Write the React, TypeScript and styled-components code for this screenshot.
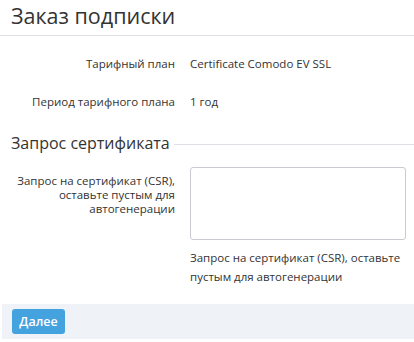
import styled, { createGlobalStyle } from "styled-components";

const GlobalStyle = createGlobalStyle`
  html, body {
    margin: 0;
    padding: 0;
    background: #fff;
  }
  body {
    font-family: "Open Sans", "Noto Sans", sans-serif;
    color: #333;
  }
`;

const Page = styled.div`
  width: 414px;
  height: 342px;
  overflow: hidden;
`;

const Header = styled.div`
  height: 35px;
  padding: 0 11px;
  border-bottom: 1px solid #dcdfe4;
  display: flex;
  align-items: center;
`;

const Title = styled.h1`
  margin: -4px 0 0;
  font-size: 21.5px;
  font-weight: 400;
  color: #333;
  line-height: 30px;
`;

const Form = styled.div`
  padding-top: 18px;
`;

const Row = styled.div<{ $top?: boolean }>`
  display: grid;
  grid-template-columns: 175px 1fr;
  column-gap: 15px;
  align-items: ${(p) => (p.$top ? "start" : "center")};
  min-height: 20px;
  margin-bottom: 18px;
  font-size: 11.5px;
`;

const Label = styled.div<{ $pad?: number }>`
  text-align: right;
  line-height: 14px;
  color: #333;
  padding-top: ${(p) => p.$pad ?? 0}px;
`;

const Value = styled.div`
  color: #333;
  line-height: 20px;
`;

const Section = styled.div`
  display: flex;
  align-items: center;
  gap: 4px;
  padding-left: 11px;
  margin-top: 20px;
  margin-bottom: 13px;
`;

const SectionTitle = styled.div`
  font-size: 16px;
  line-height: 22px;
  color: #333;
`;

const Rule = styled.div`
  flex: 1;
  height: 1px;
  background: #dcdfe4;
  margin-top: 2px;
`;

const Field = styled.div`
  padding-right: 8px;
`;

const TextArea = styled.textarea`
  display: block;
  box-sizing: border-box;
  width: 216px;
  height: 73px;
  border: 1px solid #c8ccd2;
  border-radius: 3px;
  resize: none;
  outline: none;
  font-family: inherit;
`;

const Help = styled.div`
  margin-top: 8px;
  font-size: 11.5px;
  line-height: 19px;
  white-space: nowrap;
  color: #333;
`;

const Footer = styled.div`
  margin: 15px 0 0 2px;
  height: 35px;
  background: #eff3f7;
  display: flex;
  align-items: center;
  padding-left: 10px;
`;

const Button = styled.button`
  height: 25px;
  width: 53px;
  padding: 0;
  border: none;
  border-radius: 3px;
  background: #44a3de;
  color: #fff;
  font-family: "Open Sans", "Noto Sans", sans-serif;
  font-size: 12.5px;
  font-weight: 600;
  cursor: pointer;
`;

export default function App() {
  return (
    <Page>
      <GlobalStyle />
      <Header>
        <Title>Заказ подписки</Title>
      </Header>
      <Form>
        <Row>
          <Label>Тарифный план</Label>
          <Value>Certificate Comodo EV SSL</Value>
        </Row>
        <Row>
          <Label>Период тарифного плана</Label>
          <Value>1 год</Value>
        </Row>
        <Section>
          <SectionTitle>Запрос сертификата</SectionTitle>
          <Rule />
        </Section>
        <Row $top>
          <Label $pad={7}>
            Запрос на сертификат (CSR),
            <br />
            оставьте пустым для
            <br />
            автогенерации
          </Label>
          <Field>
            <TextArea />
            <Help>
              Запрос на сертификат (CSR), оставьте
              <br />
              пустым для автогенерации
            </Help>
          </Field>
        </Row>
      </Form>
      <Footer>
        <Button>Далее</Button>
      </Footer>
    </Page>
  );
}
